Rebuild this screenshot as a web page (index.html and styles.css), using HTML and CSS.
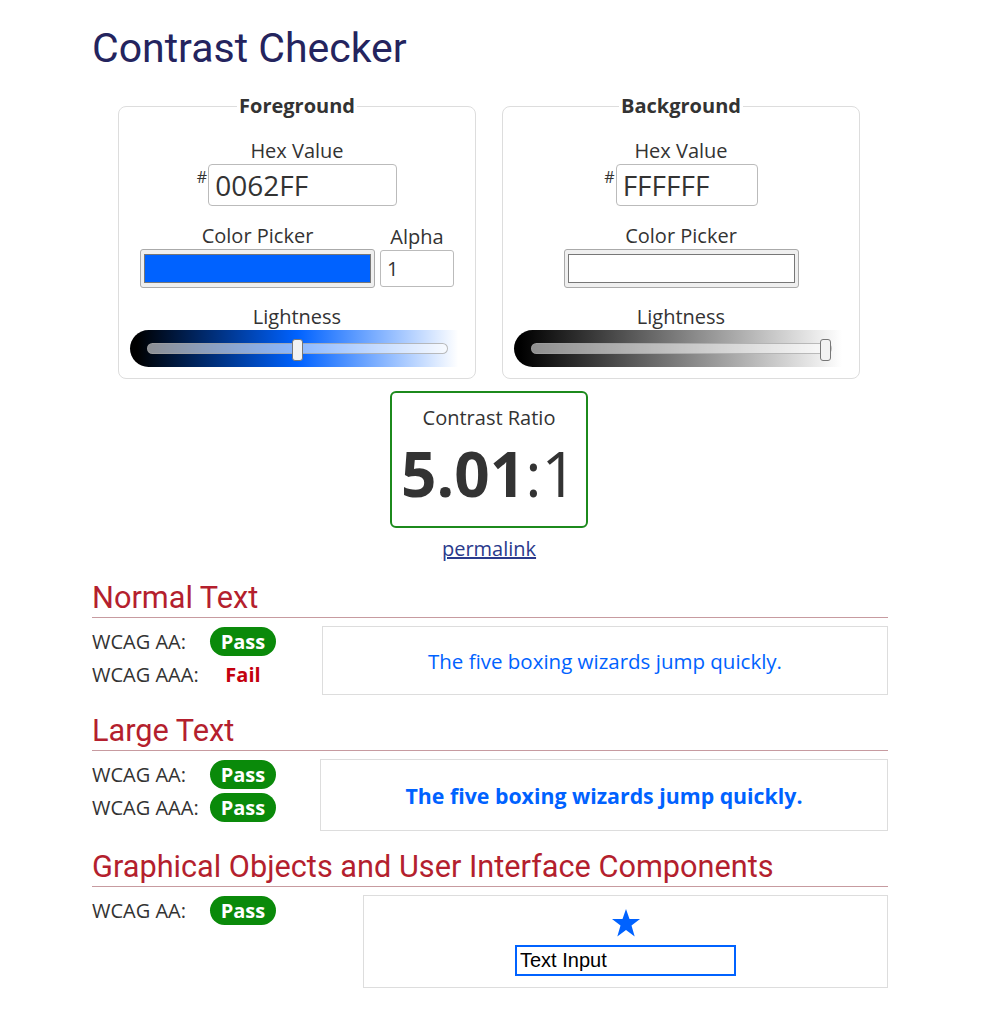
FILE: index.html
```html
<!DOCTYPE html>
<html lang="en">
<head>
  <meta charset="UTF-8">
  <meta name="viewport" content="width=device-width, initial-scale=1.0">
  <title>Contrast Checker</title>
  <link rel="stylesheet" href="styles.css">
</head>
<body>
  <div class="page">
    <h1 class="title">Contrast Checker</h1>

    <div class="pickers">
      <fieldset class="picker">
        <legend>Foreground</legend>
        <div class="field-label">Hex Value</div>
        <div class="hex-row">
          <span class="hash">#</span>
          <input class="hex-input hex-fg" type="text" value="0062FF">
        </div>
        <div class="color-row">
          <div class="color-col">
            <div class="field-label">Color Picker</div>
            <div class="swatch"><div class="swatch-fill fill-fg"></div></div>
          </div>
          <div class="alpha-col">
            <div class="field-label">Alpha</div>
            <input class="alpha-input" type="text" value="1">
          </div>
        </div>
        <div class="field-label">Lightness</div>
        <div class="slider slider-fg">
          <div class="track"></div>
          <div class="thumb" style="left: 162px;"></div>
        </div>
      </fieldset>

      <fieldset class="picker">
        <legend>Background</legend>
        <div class="field-label">Hex Value</div>
        <div class="hex-row">
          <span class="hash">#</span>
          <input class="hex-input hex-bg" type="text" value="FFFFFF">
        </div>
        <div class="color-row">
          <div class="color-col">
            <div class="field-label">Color Picker</div>
            <div class="swatch"><div class="swatch-fill fill-bg"></div></div>
          </div>
        </div>
        <div class="field-label">Lightness</div>
        <div class="slider slider-bg">
          <div class="track"></div>
          <div class="thumb" style="left: 306px;"></div>
        </div>
      </fieldset>
    </div>

    <div class="ratio-box">
      <div class="ratio-label">Contrast Ratio</div>
      <div class="ratio-value"><strong>5.01</strong>:1</div>
    </div>
    <div class="permalink"><a href="#">permalink</a></div>

    <h2 class="section-title">Normal Text</h2>
    <div class="result">
      <div class="grades">
        <span class="grade-label">WCAG AA:</span><span class="badge">Pass</span>
        <span class="grade-label">WCAG AAA:</span><span class="fail">Fail</span>
      </div>
      <div class="sample sample-normal">The five boxing wizards jump quickly.</div>
    </div>

    <h2 class="section-title">Large Text</h2>
    <div class="result">
      <div class="grades">
        <span class="grade-label">WCAG AA:</span><span class="badge">Pass</span>
        <span class="grade-label">WCAG AAA:</span><span class="badge">Pass</span>
      </div>
      <div class="sample sample-large">The five boxing wizards jump quickly.</div>
    </div>

    <h2 class="section-title">Graphical Objects and User Interface Components</h2>
    <div class="result">
      <div class="grades">
        <span class="grade-label">WCAG AA:</span><span class="badge">Pass</span>
      </div>
      <div class="sample sample-ui">
        <svg class="star" width="30" height="30" viewBox="0 0 30 30">
          <polygon points="15,1 18.5,11 29,11 20.5,17.5 23.7,28.5 15,22 6.3,28.5 9.5,17.5 1,11 11.5,11" fill="#0062ff"/>
        </svg>
        <input class="demo-input" type="text" value="Text Input">
      </div>
    </div>
  </div>
</body>
</html>
```

FILE: styles.css
```css
body {
  margin: 0;
  font-family: "Open Sans", Arial, sans-serif;
  color: #333;
  background: #fff;
}
.page {
  width: 796px;
  margin-left: 92px;
  padding-bottom: 30px;
}
.title {
  margin: 0;
  padding-top: 24px;
  font-family: Roboto, Arial, sans-serif;
  font-weight: 400;
  font-size: 41px;
  line-height: 48px;
  color: #24245e;
}

/* colour pickers */
.pickers {
  display: flex;
  gap: 26px;
  padding-left: 26px;
  margin-top: 21px;
}
.picker {
  width: 358px;
  box-sizing: border-box;
  margin: 0;
  padding: 19px 11px 11px;
  border: 1px solid #ddd;
  border-radius: 8px;
  min-inline-size: 0;
  display: flex;
  flex-direction: column;
  align-items: center;
}
.picker legend {
  margin: 0 auto;
  padding: 0 2px;
  font-weight: 700;
  font-size: 20px;
  line-height: 26px;
}
.field-label {
  font-size: 20px;
  line-height: 26px;
  text-align: center;
}
.hex-row {
  display: flex;
  align-items: flex-start;
  margin-bottom: 17px;
}
.hash {
  font-size: 16px;
  line-height: 16px;
  margin: 5px 1px 0 0;
}
.hex-input {
  height: 42px;
  box-sizing: border-box;
  border: 1px solid #bbb;
  border-radius: 4px;
  padding: 0 6px;
  font-family: "Open Sans", Arial, sans-serif;
  font-size: 28px;
  color: #333;
}
.hex-fg { width: 189px; }
.hex-bg { width: 142px; }

.color-row {
  display: flex;
  gap: 5px;
  align-items: flex-end;
  margin-bottom: 16px;
}
.color-col,
.alpha-col {
  display: flex;
  flex-direction: column;
  align-items: center;
}
.swatch {
  width: 235px;
  height: 39px;
  box-sizing: border-box;
  border: 1px solid #aaa;
  border-radius: 3px;
  background: #efefef;
  padding: 4px 3px;
}
.swatch-fill {
  height: 100%;
  box-sizing: border-box;
  border: 1px solid #777;
}
.fill-fg { background: #0062ff; }
.fill-bg { background: #fff; }
.alpha-input {
  width: 74px;
  height: 37px;
  box-sizing: border-box;
  border: 1px solid #bbb;
  border-radius: 3px;
  padding: 0 6px;
  margin-bottom: 1px;
  font-family: "Open Sans", Arial, sans-serif;
  font-size: 20px;
  color: #333;
}

.slider {
  position: relative;
  width: 335px;
  height: 37px;
  box-sizing: border-box;
  padding: 0 17px;
  display: flex;
  align-items: center;
  border-radius: 19px 0 0 19px;
}
.slider-fg { background: linear-gradient(to right, #000 2%, #0062ff 50%, #fff 98%); }
.slider-bg { background: linear-gradient(to right, #000 2%, #fff 98%); }
.track {
  flex: 1;
  height: 11px;
  box-sizing: border-box;
  border: 1px solid rgba(160, 160, 160, 0.7);
  border-radius: 6px;
  background: rgba(255, 255, 255, 0.55);
}
.thumb {
  position: absolute;
  top: 9px;
  width: 11px;
  height: 22px;
  box-sizing: border-box;
  border: 1px solid #777;
  border-radius: 3px;
  background: #f2f2f2;
}

/* ratio */
.ratio-box {
  width: 198px;
  box-sizing: border-box;
  margin: 12px 0 0 298px;
  padding: 12px 0 16px;
  border: 2px solid #1c8a1c;
  border-radius: 6px;
  text-align: center;
}
.ratio-label {
  font-size: 20px;
  line-height: 26px;
}
.ratio-value {
  margin-top: 5px;
  font-size: 62px;
  line-height: 74px;
}
.ratio-value strong {
  font-weight: 700;
}
.permalink {
  width: 198px;
  margin: 8px 0 0 298px;
  text-align: center;
  font-size: 20px;
  line-height: 26px;
}
.permalink a {
  color: #2a3a8c;
}

/* results */
.section-title {
  margin: 18px 0 0;
  padding-bottom: 1px;
  border-bottom: 1px solid #c79ba0;
  font-family: Roboto, Arial, sans-serif;
  font-weight: 400;
  font-size: 30.7px;
  line-height: 36px;
  color: #b41f2e;
}
.result {
  display: flex;
  align-items: flex-start;
  margin-top: 8px;
}
.grades {
  display: grid;
  grid-template-columns: 118px 66px;
  row-gap: 4px;
  margin-top: 1px;
  align-items: center;
}
.grade-label {
  font-size: 20px;
  line-height: 29px;
}
.badge {
  height: 29px;
  border-radius: 15px;
  background: #0a8a0a;
  color: #fff;
  font-weight: 700;
  font-size: 20px;
  line-height: 29px;
  text-align: center;
}
.fail {
  color: #c4000e;
  font-weight: 700;
  font-size: 20px;
  line-height: 29px;
  text-align: center;
}
.sample {
  flex: 1;
  box-sizing: border-box;
  border: 1px solid #ddd;
  display: flex;
  align-items: center;
  justify-content: center;
  color: #0062ff;
  font-size: 20.5px;
}
.sample-normal {
  margin-left: 46px;
  height: 69px;
}
.sample-large {
  margin-left: 44px;
  height: 72px;
  font-size: 21.3px;
  font-weight: 700;
}
.sample-ui {
  margin-left: 87px;
  flex-direction: column;
  gap: 7px;
  padding: 12px 0 11px;
}
.star {
  display: block;
}
.demo-input {
  width: 221px;
  height: 31px;
  box-sizing: border-box;
  border: 2px solid #0062ff;
  padding: 0 3px;
  font-family: Arial, "Liberation Sans", sans-serif;
  font-size: 20px;
  color: #000;
}
```
